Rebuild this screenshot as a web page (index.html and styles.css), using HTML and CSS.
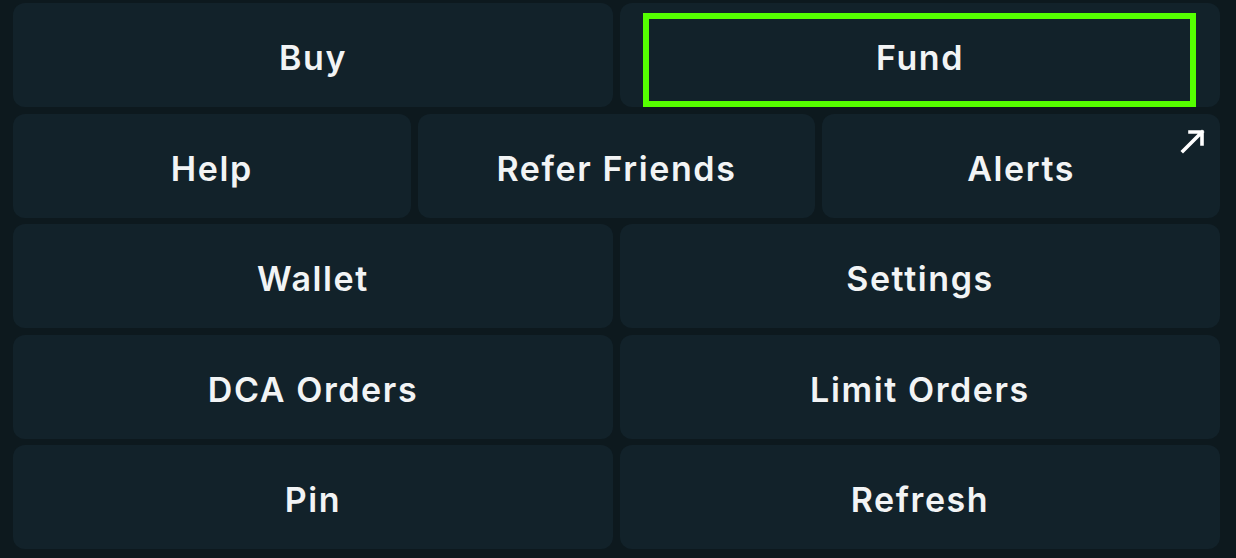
FILE: index.html
```html
<!DOCTYPE html>
<html>
<head>
<meta charset="utf-8">
<link rel="stylesheet" href="styles.css">
</head>
<body>
<div class="grid">
  <div class="btn half">Buy</div>
  <div class="btn half">Fund<span class="focus"></span></div>
  <div class="btn third">Help</div>
  <div class="btn third">Refer Friends</div>
  <div class="btn third">Alerts
    <svg class="ext" width="26" height="26" viewBox="0 0 26 26"><path d="M3 23 L22 4 M10 4 H22 V16" fill="none" stroke="#fff" stroke-width="3.6" stroke-linecap="square"/></svg>
  </div>
  <div class="btn half">Wallet</div>
  <div class="btn half">Settings</div>
  <div class="btn half">DCA Orders</div>
  <div class="btn half">Limit Orders</div>
  <div class="btn half">Pin</div>
  <div class="btn half">Refresh</div>
</div>
</body>
</html>
```
FILE: styles.css
```css
html, body { margin: 0; padding: 0; }
body {
  background: #0d191e;
  width: 1236px;
  height: 558px;
  overflow: hidden;
  font-family: Inter, "Noto Sans", sans-serif;
}
.grid {
  display: grid;
  grid-template-columns: repeat(6, 1fr);
  grid-auto-rows: 104px;
  column-gap: 7px;
  row-gap: 6.5px;
  padding: 3px 16px 9px 13px;
}
.btn {
  position: relative;
  background: #12222a;
  border-radius: 12px;
  display: flex;
  align-items: center;
  justify-content: center;
  padding-top: 5px;
  box-sizing: border-box;
  color: #f2f4f5;
  font-size: 34px;
  font-weight: 600;
  letter-spacing: 1.6px;
}
.half { grid-column: span 3; }
.third { grid-column: span 2; }
.focus {
  position: absolute;
  left: 23px;
  right: 24px;
  top: 10px;
  bottom: 0;
  border: 6px solid #55ff00;
}
.ext {
  position: absolute;
  right: 14px;
  top: 14px;
}
```
